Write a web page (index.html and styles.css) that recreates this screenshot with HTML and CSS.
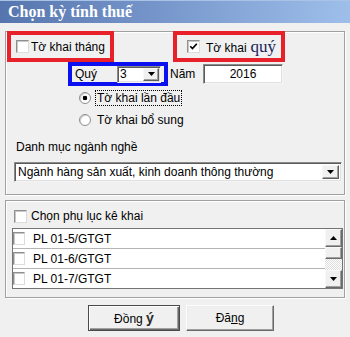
FILE: index.html
```html
<!DOCTYPE html>
<html lang="vi">
<head>
<meta charset="utf-8">
<title>Chọn kỳ tính thuế</title>
<link rel="stylesheet" href="styles.css">
</head>
<body>
<div class="window">
  <div class="titlebar">Chọn kỳ tính thuế</div>
  <div class="client">
    <section class="group group-main">
      <div class="row-period">
        <label class="mark-red mark-month">
          <span class="check"></span><span>Tờ khai tháng</span>
        </label>
        <label class="mark-red mark-quarter">
          <span class="check"><svg class="tick" viewBox="0 0 9 9" width="9" height="9"><path d="M1.3 4.2 L3.5 6.6 L7.8 1.8" fill="none" stroke="#000" stroke-width="1.7"/></svg></span><span class="quarter-text">Tờ khai <span class="big">quý</span></span>
        </label>
      </div>
      <div class="row-quarter">
        <div class="mark-blue">
          <span class="lbl-quy">Quý</span>
          <div class="combo combo-small">
            <span class="combo-text">3</span>
            <span class="combo-btn"><svg viewBox="0 0 7 4" width="7" height="4"><path d="M0 0 H7 L3.5 4 Z" fill="#000"/></svg></span>
          </div>
        </div>
        <span class="lbl-nam">Năm</span>
        <div class="textbox">2016</div>
      </div>
      <div class="radio-row"><span class="radio on"></span><span class="radio-text focus">Tờ khai lần đầu</span></div>
      <div class="radio-row"><span class="radio"></span><span class="radio-text">Tờ khai bổ sung</span></div>
      <div class="field-label">Danh mục ngành nghề</div>
      <div class="combo combo-wide">
        <span class="combo-text">Ngành hàng sản xuất, kinh doanh thông thường</span>
        <span class="combo-btn"><svg viewBox="0 0 7 4" width="7" height="4"><path d="M0 0 H7 L3.5 4 Z" fill="#000"/></svg></span>
      </div>
    </section>

    <section class="group group-appendix">
      <label class="appendix-head"><span class="check"></span><span>Chọn phụ lục kê khai</span></label>
      <div class="listbox">
        <div class="list-rows">
          <div class="list-row"><span class="check small"></span><span>PL 01-5/GTGT</span></div>
          <div class="list-row"><span class="check small"></span><span>PL 01-6/GTGT</span></div>
          <div class="list-row"><span class="check small"></span><span>PL 01-7/GTGT</span></div>
        </div>
        <div class="scrollbar">
          <span class="sb-btn"><svg viewBox="0 0 7 4" width="7" height="4"><path d="M0 4 H7 L3.5 0 Z" fill="#000"/></svg></span>
          <span class="sb-thumb"></span>
          <span class="sb-track"></span>
          <span class="sb-btn"><svg viewBox="0 0 7 4" width="7" height="4"><path d="M0 0 H7 L3.5 4 Z" fill="#000"/></svg></span>
        </div>
      </div>
    </section>

    <div class="buttons">
      <button class="btn btn-default" type="button">Đồng <span class="accent">ý</span></button>
      <button class="btn" type="button">Đă<u>n</u>g</button>
    </div>
  </div>
</div>
</body>
</html>
```

FILE: styles.css
```css
* { box-sizing: border-box; }
html, body { margin: 0; padding: 0; }
body {
  width: 350px;
  height: 337px;
  overflow: hidden;
  background: #f0f0f0;
  font-family: "Liberation Sans", Arial, sans-serif;
  font-size: 12px;
  color: #000;
}
.window { width: 350px; height: 337px; }

.titlebar {
  height: 23px;
  padding: 1px 0 0 8px;
  background: linear-gradient(90deg, #5675ae 0%, #7696cb 45%, #9ebfea 100%);
  box-shadow: inset 0 1px 0 #a9c3e6;
  color: #fff;
  font: bold 16px/22px "Liberation Serif", "Times New Roman", serif;
  white-space: nowrap;
}

.client { padding: 8px 5px 0 5px; }

.group {
  border: 1px solid #a0a0a0;
  box-shadow: inset 1px 1px 0 #fff, 1px 1px 0 #fff;
}
.group-main { padding: 0 0 12px 0; }
.group-appendix { margin-top: 5px; padding: 0 0 8px 0; }

/* checkbox */
.check {
  flex: none;
  width: 13px;
  height: 13px;
  background: #fff;
  border: 1px solid;
  border-color: #8e8f8f #dcdcdc #dcdcdc #8e8f8f;
  box-shadow: inset 1px 1px 0 #c8c8c8;
  display: flex;
  align-items: center;
  justify-content: center;
}
.check.small { width: 12px; height: 13px; }

/* annotation boxes */
.row-period { display: flex; margin-top: -1px; height: 31px; }
.mark-red {
  height: 31px;
  border: 4px solid #e8202a;
  display: flex;
  align-items: center;
  white-space: nowrap;
}
.mark-month { margin-left: 1px; width: 107px; padding-left: 5px; gap: 2px; }
.mark-quarter { margin-left: 59px; width: 112px; padding-left: 10px; gap: 6px; }
.quarter-text { display: flex; align-items: baseline; }
.big {
  margin-left: 4px;
  font: 17px "Liberation Serif", "Times New Roman", serif;
  color: #1b1f5c;
}

.row-quarter { display: flex; align-items: center; height: 24px; }
.mark-blue {
  margin-left: 62px;
  width: 100px;
  height: 24px;
  border: 4px solid #0a10f0;
  display: flex;
  align-items: center;
}
.lbl-quy { width: 45px; padding-left: 3px; }
.lbl-nam { margin-left: 2px; width: 33px; }

/* combo boxes */
.combo {
  display: flex;
  align-items: center;
  background: #fff;
  border: 1px solid;
  border-color: #8a8a8a #f4f4f4 #f4f4f4 #8a8a8a;
  box-shadow: inset 1px 1px 0 #5a5a5a, inset -1px -1px 0 #e0e0e0;
  padding: 2px;
}
.combo-text { flex: 1; white-space: nowrap; overflow: hidden; }
.combo-btn {
  flex: none;
  align-self: stretch;
  display: flex;
  align-items: center;
  justify-content: center;
  background: #f0f0f0;
  border: 1px solid;
  border-color: #f8f8f8 #5e5e5e #5e5e5e #f8f8f8;
  box-shadow: inset -1px -1px 0 #a0a0a0;
}
.combo-small { width: 44px; height: 17px; padding: 1px 1px 1px 2px; }
.combo-small .combo-btn { width: 16px; }
.combo-wide { margin: 7px 0 0 8px; width: 328px; height: 20px; padding: 2px 2px 2px 3px; }
.combo-wide .combo-btn { width: 17px; }

.textbox {
  width: 80px;
  height: 20px;
  background: #fff;
  border: 1px solid;
  border-color: #8a8a8a #f4f4f4 #f4f4f4 #8a8a8a;
  box-shadow: inset 1px 1px 0 #5a5a5a, inset -1px -1px 0 #e0e0e0;
  text-align: center;
  line-height: 18px;
}

/* radios */
.radio-row {
  display: flex;
  align-items: center;
  height: 20px;
  margin-top: 2px;
  padding-left: 73px;
  gap: 4px;
}
.radio {
  flex: none;
  width: 12px;
  height: 12px;
  border-radius: 50%;
  border: 1px solid #8e8f8f;
  background: #fff;
  box-shadow: inset 1px 1px 0 #cfcfcf;
}
.radio.on { background: radial-gradient(circle, #000 0 2px, #fff 2.6px); }
.radio-text { border: 1px solid transparent; padding: 0 1px; line-height: 14px; }
.radio-text.focus { border: 1px dotted #000; }

.field-label { margin-top: 9px; height: 16px; line-height: 16px; padding-left: 10px; }

/* appendix */
.appendix-head {
  display: flex;
  align-items: center;
  gap: 4px;
  height: 16px;
  margin-top: 7px;
  padding-left: 8px;
}
.listbox {
  display: flex;
  margin: 4px 0 0 6px;
  width: 331px;
  height: 61px;
  background: #fff;
  border: 1px solid #747474;
}
.list-rows { flex: 1; display: flex; flex-direction: column; }
.list-row {
  display: flex;
  align-items: center;
  gap: 8px;
  height: 20px;
  border-bottom: 1px solid #b4b4b4;
}
.list-row:last-child { height: 19px; border-bottom: 0; }

.scrollbar { flex: none; width: 17px; display: flex; flex-direction: column; }
.sb-btn, .sb-thumb {
  flex: none;
  display: flex;
  align-items: center;
  justify-content: center;
  background: #f0f0f0;
  border: 1px solid;
  border-color: #f8f8f8 #6a6a6a #6a6a6a #f8f8f8;
  box-shadow: inset -1px -1px 0 #a0a0a0;
}
.sb-btn { height: 18px; }
.sb-thumb { height: 12px; }
.sb-track {
  flex: 1;
  background: repeating-conic-gradient(#ffffff 0 25%, #dcdcdc 0 50%) 0 0 / 2px 2px;
}

/* buttons */
.buttons { display: flex; gap: 6px; margin-top: 7px; padding-left: 83px; }
.btn {
  height: 26px;
  width: 88px;
  padding: 0;
  font: 12px "Liberation Sans", Arial, sans-serif;
  color: #000;
  background: #f0f0f0;
  border: 1px solid;
  border-color: #fdfdfd #6a6a6a #6a6a6a #fdfdfd;
  box-shadow: inset -1px -1px 0 #a0a0a0, inset 1px 1px 0 #ececec;
}
.btn-default {
  width: 92px;
  border: 1px solid #4a4a4a;
  box-shadow: inset 1px 1px 0 #fdfdfd, inset -1px -1px 0 #6a6a6a, inset -2px -2px 0 #a0a0a0;
}
.accent { font-size: 14px; font-weight: bold; color: #2a2a2a; }
```
